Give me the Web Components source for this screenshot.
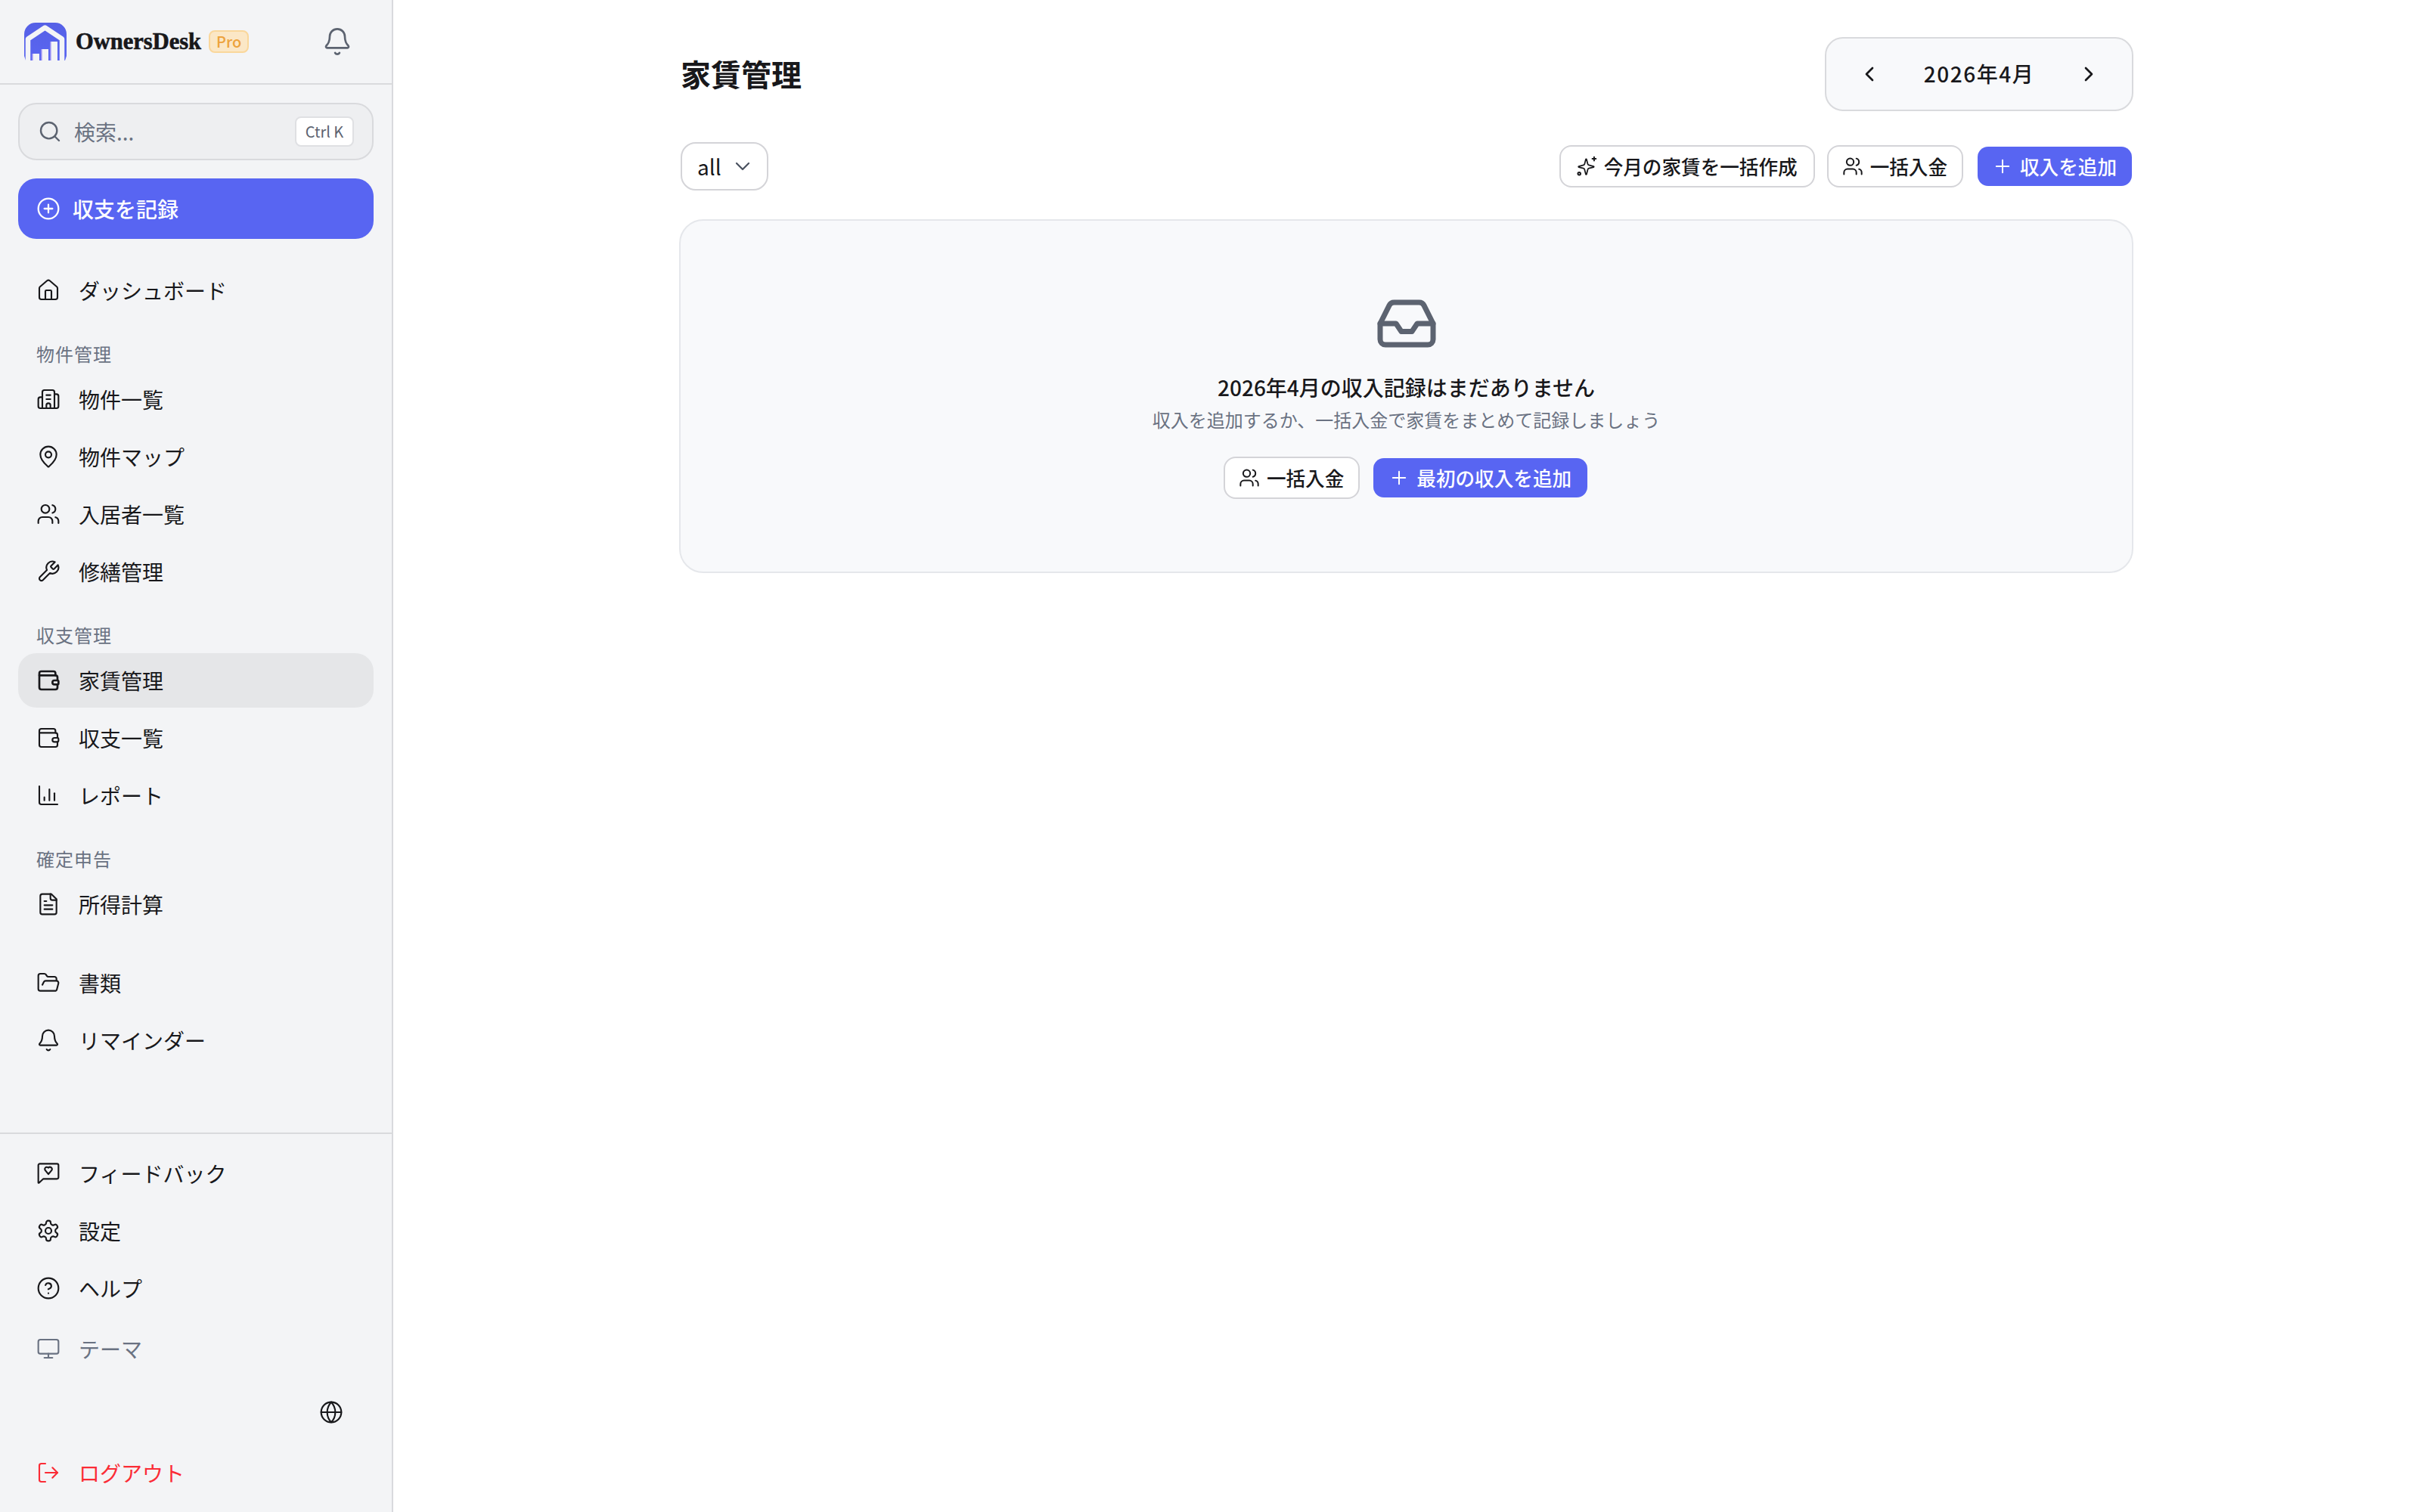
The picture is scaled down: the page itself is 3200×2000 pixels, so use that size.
<!DOCTYPE html>
<html lang="ja">
<head>
<meta charset="utf-8">
<title>OwnersDesk</title>
<style>
  html, body { margin: 0; background: #fff; }
  body {
    font-family: "Noto Sans CJK JP", "Noto Sans", sans-serif;
    color: #18181b;
  }
</style>
</head>
<body>
<od-app>
  <od-sidebar slot="sidebar">
    <od-search></od-search>
    <od-record-button>収支を記録</od-record-button>

    <od-nav-group>
      <od-nav-item icon="house">ダッシュボード</od-nav-item>
    </od-nav-group>
    <od-nav-group label="物件管理">
      <od-nav-item icon="building">物件一覧</od-nav-item>
      <od-nav-item icon="pin">物件マップ</od-nav-item>
      <od-nav-item icon="users">入居者一覧</od-nav-item>
      <od-nav-item icon="wrench">修繕管理</od-nav-item>
    </od-nav-group>
    <od-nav-group label="収支管理">
      <od-nav-item icon="wallet" active>家賃管理</od-nav-item>
      <od-nav-item icon="wallet">収支一覧</od-nav-item>
      <od-nav-item icon="chart">レポート</od-nav-item>
    </od-nav-group>
    <od-nav-group label="確定申告">
      <od-nav-item icon="file">所得計算</od-nav-item>
    </od-nav-group>
    <od-nav-group>
      <od-nav-item icon="folder">書類</od-nav-item>
      <od-nav-item icon="bell">リマインダー</od-nav-item>
    </od-nav-group>

    <od-nav-item slot="footer" icon="feedback">フィードバック</od-nav-item>
    <od-nav-item slot="footer" icon="settings">設定</od-nav-item>
    <od-nav-item slot="footer" icon="help">ヘルプ</od-nav-item>
    <od-nav-item slot="footer" icon="monitor" tone="muted" style="margin-top:5px">テーマ</od-nav-item>
    <od-lang-row slot="footer" style="margin-top:8px"></od-lang-row>
    <od-nav-item slot="footer" icon="logout" tone="danger" style="margin-top:4px">ログアウト</od-nav-item>
  </od-sidebar>

  <od-page-head>
    家賃管理
    <od-month-nav slot="actions">2026年4月</od-month-nav>
  </od-page-head>

  <od-toolbar>
    <od-select slot="start">all</od-select>
    <od-button icon="sparkles" style="padding:0 21px 0 20px">今月の家賃を一括作成</od-button>
    <od-button icon="users">一括入金</od-button>
    <od-button icon="plus" variant="primary" style="margin-left:1px">収入を追加</od-button>
  </od-toolbar>

  <od-empty-state>
    <span slot="title">2026年4月の収入記録はまだありません</span>
    <span slot="desc">収入を追加するか、一括入金で家賃をまとめて記録しましょう</span>
    <od-button slot="actions" icon="users">一括入金</od-button>
    <od-button slot="actions" icon="plus" variant="primary" style="padding:0 21px 0 20px">最初の収入を追加</od-button>
  </od-empty-state>
</od-app>

<script>
// lucide系のパス。線の太さは od-icon 側で指定する
const ICONS = {
  house: '<path d="M15 21v-8a1 1 0 0 0-1-1h-4a1 1 0 0 0-1 1v8"/><path d="M3 10a2 2 0 0 1 .709-1.528l7-5.999a2 2 0 0 1 2.582 0l7 5.999A2 2 0 0 1 21 10v9a2 2 0 0 1-2 2H5a2 2 0 0 1-2-2z"/>',
  building: '<path d="M10 12h4"/><path d="M10 8h4"/><path d="M14 21v-3a2 2 0 0 0-4 0v3"/><path d="M6 10H4a2 2 0 0 0-2 2v7a2 2 0 0 0 2 2h16a2 2 0 0 0 2-2V9a2 2 0 0 0-2-2h-2"/><path d="M6 21V5a2 2 0 0 1 2-2h8a2 2 0 0 1 2 2v16"/>',
  pin: '<path d="M20 10c0 4.993-5.539 10.193-7.399 11.799a1 1 0 0 1-1.202 0C9.539 20.193 4 14.993 4 10a8 8 0 0 1 16 0"/><circle cx="12" cy="10" r="3"/>',
  users: '<path d="M16 21v-2a4 4 0 0 0-4-4H6a4 4 0 0 0-4 4v2"/><path d="M16 3.128a4 4 0 0 1 0 7.744"/><path d="M22 21v-2a4 4 0 0 0-3-3.87"/><circle cx="9" cy="7" r="4"/>',
  wrench: '<path d="M14.7 6.3a1 1 0 0 0 0 1.4l1.6 1.6a1 1 0 0 0 1.4 0l3.77-3.77a6 6 0 0 1-7.94 7.94l-6.91 6.91a2.12 2.12 0 0 1-3-3l6.91-6.91a6 6 0 0 1 7.94-7.94l-3.76 3.76z"/>',
  wallet: '<path d="M19 7V5a2 2 0 0 0-2-2H5a2 2 0 0 0-2 2v14a2 2 0 0 0 2 2h14a2 2 0 0 0 2-2v-3"/><path d="M3 7h16a2 2 0 0 1 2 2v3"/><path d="M21 12h-3a2 2 0 0 0 0 4h3a1 1 0 0 0 1-1v-2a1 1 0 0 0-1-1z"/>',
  chart: '<path d="M3 3v16a2 2 0 0 0 2 2h16"/><path d="M8 17v-3"/><path d="M13 17V6"/><path d="M18 17v-7"/>',
  file: '<path d="M15 2H6a2 2 0 0 0-2 2v16a2 2 0 0 0 2 2h12a2 2 0 0 0 2-2V7Z"/><path d="M14 2v4a2 2 0 0 0 2 2h4"/><path d="M10 9H8"/><path d="M16 13H8"/><path d="M16 17H8"/>',
  folder: '<path d="m6 14 1.5-2.9A2 2 0 0 1 9.24 10H20a2 2 0 0 1 1.94 2.5l-1.54 6a2 2 0 0 1-1.95 1.5H4a2 2 0 0 1-2-2V5a2 2 0 0 1 2-2h3.9a2 2 0 0 1 1.69.9l.81 1.2a2 2 0 0 0 1.67.9H18a2 2 0 0 1 2 2v2"/>',
  bell: '<path d="M10.268 21a2 2 0 0 0 3.464 0"/><path d="M3.262 15.326A1 1 0 0 0 4 17h16a1 1 0 0 0 .74-1.673C19.41 13.956 18 12.499 18 8A6 6 0 0 0 6 8c0 4.499-1.411 5.956-2.738 7.326"/>',
  feedback: '<path d="M22 16a1.5 1.5 0 0 1-1.5 1.5H7l-4.4 4a.4.4 0 0 1-.6-.3V4a1.5 1.5 0 0 1 1.5-1.5h17A1.5 1.5 0 0 1 22 4z"/><path d="M14.8 6.3a2 2 0 0 0-2.7 0l-.1.2-.2-.2a2 2 0 1 0-2.7 3l2.9 3.5 3-3.5c.9-1 .8-2.1-.2-3"/>',
  settings: '<path d="M12.22 2h-.44a2 2 0 0 0-2 2v.18a2 2 0 0 1-1 1.73l-.43.25a2 2 0 0 1-2 0l-.15-.08a2 2 0 0 0-2.73.73l-.22.38a2 2 0 0 0 .73 2.73l.15.1a2 2 0 0 1 1 1.72v.51a2 2 0 0 1-1 1.74l-.15.09a2 2 0 0 0-.73 2.73l.22.38a2 2 0 0 0 2.73.73l.15-.08a2 2 0 0 1 2 0l.43.25a2 2 0 0 1 1 1.73V20a2 2 0 0 0 2 2h.44a2 2 0 0 0 2-2v-.18a2 2 0 0 1 1-1.73l.43-.25a2 2 0 0 1 2 0l.15.08a2 2 0 0 0 2.73-.73l.22-.39a2 2 0 0 0-.73-2.73l-.15-.08a2 2 0 0 1-1-1.74v-.5a2 2 0 0 1 1-1.74l.15-.09a2 2 0 0 0 .73-2.73l-.22-.38a2 2 0 0 0-2.73-.73l-.15.08a2 2 0 0 1-2 0l-.43-.25a2 2 0 0 1-1-1.73V4a2 2 0 0 0-2-2z"/><circle cx="12" cy="12" r="3"/>',
  help: '<circle cx="12" cy="12" r="10"/><path d="M9.09 9a3 3 0 0 1 5.83 1c0 2-3 3-3 3"/><path d="M12 17h.01"/>',
  monitor: '<rect width="20" height="14" x="2" y="3" rx="2"/><path d="M8 21h8"/><path d="M12 17v4"/>',
  globe: '<circle cx="12" cy="12" r="10"/><path d="M12 2a14.5 14.5 0 0 0 0 20 14.5 14.5 0 0 0 0-20"/><path d="M2 12h20"/>',
  logout: '<path d="M9 21H5a2 2 0 0 1-2-2V5a2 2 0 0 1 2-2h4"/><path d="m16 17 5-5-5-5"/><path d="M21 12H9"/>',
  search: '<circle cx="11" cy="11" r="8"/><path d="m21 21-4.3-4.3"/>',
  circlePlus: '<circle cx="12" cy="12" r="10"/><path d="M8 12h8"/><path d="M12 8v8"/>',
  plus: '<path d="M5 12h14"/><path d="M12 5v14"/>',
  left: '<path d="m15 18-6-6 6-6"/>',
  right: '<path d="m9 18 6-6-6-6"/>',
  down: '<path d="m6 9 6 6 6-6"/>',
  sparkles: '<path transform="translate(11.5 12.5) scale(.88) translate(-12 -12)" d="M9.937 15.5A2 2 0 0 0 8.5 14.063l-6.135-1.582a.5.5 0 0 1 0-.962L8.5 9.936A2 2 0 0 0 9.937 8.5l1.582-6.135a.5.5 0 0 1 .963 0L14.063 8.5A2 2 0 0 0 15.5 9.937l6.135 1.581a.5.5 0 0 1 0 .964L15.5 14.063a2 2 0 0 0-1.437 1.437l-1.582 6.135a.5.5 0 0 1-.963 0z"/><path d="M20.5 1.5v4"/><path d="M22.5 3.5h-4"/><circle cx="3.6" cy="20.4" r="1.5"/>',
  inbox: '<path d="M22 12h-6l-2 3h-4l-2-3H2"/><path d="M5.45 5.11 2 12v6a2 2 0 0 0 2 2h16a2 2 0 0 0 2-2v-6l-3.45-6.89A2 2 0 0 0 16.76 4H7.24a2 2 0 0 0-1.79 1.11z"/>'
};

class OdIcon extends HTMLElement {
  connectedCallback() {
    const name = this.getAttribute('name');
    const size = this.getAttribute('size') || 32;
    const sw = this.getAttribute('stroke') || 1.6;
    const shadow = this.shadowRoot || this.attachShadow({ mode: 'open' });
    shadow.innerHTML = `
      <style>
        :host { display: inline-flex; flex: none; width: ${size}px; height: ${size}px; }
        svg { display: block; width: 100%; height: 100%; }
      </style>
      <svg viewBox="0 0 24 24" fill="none" stroke="currentColor" stroke-width="${sw}"
        stroke-linecap="round" stroke-linejoin="round">${ICONS[name] || ''}</svg>`;
  }
}

class OdLogo extends HTMLElement {
  constructor() {
    super();
    this.attachShadow({ mode: 'open' }).innerHTML = `
      <style>
        :host { display: flex; align-items: center; }
        svg { display: block; width: 56px; height: 50px; flex: none; }
        .name {
          margin-left: 12px;
          font: 700 30.5px/40px "Liberation Serif", serif;
          color: #18181b;
          -webkit-text-stroke: .6px #18181b;
        }
        .pro {
          margin-left: 10px;
          box-sizing: border-box;
          height: 30px;
          padding: 0 8px;
          display: flex;
          align-items: center;
          border: 2px solid #fad79b;
          border-radius: 8px;
          background: #fbe7c6;
          color: #eda33c;
          font: 500 20px/1 "Noto Sans CJK JP", sans-serif;
        }
      </style>
      <svg viewBox="0 0 56 50">
        <defs>
          <linearGradient id="g" x1="0" y1="0" x2="0" y2="1">
            <stop offset="0" stop-color="#5560e6"/>
            <stop offset="1" stop-color="#5a66f1"/>
          </linearGradient>
        </defs>
        <path d="M0 44V15A15 15 0 0 1 15 0H41A15 15 0 0 1 56 15V44L54 50H2z" fill="url(#g)"/>
        <path d="M5 50V21.5L27.5 6.5L50 21.5V50" fill="none" stroke="#f3f4f6" stroke-width="6.5" stroke-linejoin="round"/>
        <rect x="11" y="41" width="9" height="9" fill="#f3f4f6"/>
        <rect x="23" y="35" width="9" height="15" fill="#f3f4f6"/>
        <rect x="35" y="25" width="9" height="25" fill="#f3f4f6"/>
        <path d="M11 41v9M23 35v15M35 25v25" stroke="#a79cf5" stroke-width="1.4"/>
      </svg>
      <span class="name">OwnersDesk</span>
      <span class="pro">Pro</span>`;
  }
}

class OdSearch extends HTMLElement {
  constructor() {
    super();
    this.attachShadow({ mode: 'open' }).innerHTML = `
      <style>
        :host {
          display: flex;
          align-items: center;
          box-sizing: border-box;
          height: 76px;
          padding: 0 24px;
          border: 2px solid #d9dadd;
          border-radius: 24px;
          background: #eeeff1;
          color: #6a7282;
        }
        od-icon { color: #5c6370; }
        .ph { margin-left: 16px; flex: 1; font-size: 28px; line-height: 40px; }
        kbd {
          box-sizing: border-box;
          width: 78px;
          height: 40px;
          display: flex;
          align-items: center;
          justify-content: center;
          border: 2px solid #dfe0e3;
          border-radius: 8px;
          background: #fff;
          color: #5c6370;
          font: 400 20px/1 "Noto Sans CJK JP", sans-serif;
        }
      </style>
      <od-icon name="search" stroke="1.8"></od-icon>
      <span class="ph">検索...</span>
      <kbd>Ctrl K</kbd>`;
  }
}

class OdRecordButton extends HTMLElement {
  constructor() {
    super();
    this.attachShadow({ mode: 'open' }).innerHTML = `
      <style>
        :host {
          display: flex;
          align-items: center;
          box-sizing: border-box;
          height: 80px;
          margin-top: 24px;
          padding: 0 24px;
          border-radius: 24px;
          background: #5865f2;
          color: #fff;
          font-size: 28px;
          font-weight: 500;
          line-height: 40px;
        }
        od-icon { margin-right: 16px; }
      </style>
      <od-icon name="circlePlus" size="32" stroke="1.7"></od-icon>
      <slot></slot>`;
  }
}

class OdNavGroup extends HTMLElement {
  connectedCallback() {
    const label = this.getAttribute('label');
    const shadow = this.shadowRoot || this.attachShadow({ mode: 'open' });
    shadow.innerHTML = `
      <style>
        :host { display: flex; flex-direction: column; gap: 4px; margin-top: 32px; }
        .label {
          margin-bottom: 4px;
          padding-left: 24px;
          font-size: 24px;
          line-height: 32px;
          letter-spacing: 1px;
          color: #6a7282;
        }
      </style>
      ${label ? `<div class="label">${label}</div>` : ''}
      <slot></slot>`;
  }
}

class OdNavItem extends HTMLElement {
  connectedCallback() {
    const icon = this.getAttribute('icon');
    const active = this.hasAttribute('active');
    const shadow = this.shadowRoot || this.attachShadow({ mode: 'open' });
    shadow.innerHTML = `
      <style>
        :host {
          display: flex;
          align-items: center;
          box-sizing: border-box;
          height: 72px;
          padding: 0 24px;
          gap: 24px;
          border-radius: 24px;
          font-size: 28px;
          line-height: 40px;
          color: #18181b;
        }
        :host([active]) { background: #e5e6e8; }
        :host([tone="muted"]) { color: #6a7282; }
        :host([tone="danger"]) { color: #fb2c36; }
      </style>
      <od-icon name="${icon}" stroke="${active ? 2 : 1.6}"></od-icon>
      <span><slot></slot></span>`;
  }
}

class OdLangRow extends HTMLElement {
  constructor() {
    super();
    this.attachShadow({ mode: 'open' }).innerHTML = `
      <style>
        :host {
          display: flex;
          align-items: center;
          justify-content: flex-end;
          height: 72px;
          padding-right: 40px;
        }
      </style>
      <od-icon name="globe"></od-icon>`;
  }
}

class OdSidebar extends HTMLElement {
  constructor() {
    super();
    this.attachShadow({ mode: 'open' }).innerHTML = `
      <style>
        :host {
          display: flex;
          flex-direction: column;
          flex: none;
          box-sizing: border-box;
          width: 520px;
          height: 2000px;
          border-right: 2px solid #d9dadd;
          background: #f3f4f6;
        }
        header {
          display: flex;
          align-items: center;
          justify-content: space-between;
          box-sizing: border-box;
          height: 112px;
          padding: 0 52px 0 32px;
          border-bottom: 2px solid #d9dadd;
        }
        header od-icon { color: #5c6370; }
        .body { flex: 1; padding: 24px 24px 0; }
        .foot {
          display: flex;
          flex-direction: column;
          gap: 4px;
          box-sizing: border-box;
          height: 502px;
          padding: 16px 24px;
          border-top: 2px solid #d9dadd;
        }
      </style>
      <header>
        <od-logo></od-logo>
        <od-icon name="bell" size="40" stroke="1.6"></od-icon>
      </header>
      <div class="body"><slot></slot></div>
      <div class="foot"><slot name="footer"></slot></div>`;
  }
}

class OdPageHead extends HTMLElement {
  constructor() {
    super();
    this.attachShadow({ mode: 'open' }).innerHTML = `
      <style>
        :host { display: flex; align-items: center; justify-content: space-between; padding-left: 2px; }
        h1 { margin: 0 0 3px; font-size: 40px; line-height: 56px; font-weight: 700; color: #18181b; }
      </style>
      <h1><slot></slot></h1>
      <slot name="actions"></slot>`;
  }
}

class OdMonthNav extends HTMLElement {
  constructor() {
    super();
    this.attachShadow({ mode: 'open' }).innerHTML = `
      <style>
        :host {
          display: flex;
          align-items: center;
          justify-content: space-between;
          box-sizing: border-box;
          width: 408px;
          height: 98px;
          padding: 0 41px;
          border: 2px solid #d9dadd;
          border-radius: 24px;
          background: #f8f9fb;
          font-size: 28px;
          font-weight: 500;
          line-height: 40px;
          letter-spacing: 1.5px;
        }
        span { margin-top: -2px; }
      </style>
      <od-icon name="left" stroke="2"></od-icon>
      <span><slot></slot></span>
      <od-icon name="right" stroke="2"></od-icon>`;
  }
}

class OdToolbar extends HTMLElement {
  constructor() {
    super();
    this.attachShadow({ mode: 'open' }).innerHTML = `
      <style>
        :host {
          display: flex;
          align-items: center;
          justify-content: space-between;
          height: 64px;
          margin: 41px 0 38px;
          padding-left: 2px;
        }
        .right { display: flex; align-items: center; gap: 16px; }
      </style>
      <slot name="start"></slot>
      <div class="right"><slot></slot></div>`;
  }
}

class OdSelect extends HTMLElement {
  constructor() {
    super();
    this.attachShadow({ mode: 'open' }).innerHTML = `
      <style>
        :host {
          display: flex;
          align-items: center;
          box-sizing: border-box;
          width: 116px;
          height: 64px;
          padding: 0 16px 0 20px;
          border: 2px solid #d4d4d8;
          border-radius: 20px;
          font-size: 28px;
          line-height: 40px;
          background: #fff;
        }
        span { flex: 1; }
        od-icon { color: #4b5260; }
      </style>
      <span><slot></slot></span>
      <od-icon name="down" size="32" stroke="1.7"></od-icon>`;
  }
}

class OdButton extends HTMLElement {
  connectedCallback() {
    const icon = this.getAttribute('icon');
    const shadow = this.shadowRoot || this.attachShadow({ mode: 'open' });
    shadow.innerHTML = `
      <style>
        :host {
          display: inline-flex;
          align-items: center;
          box-sizing: border-box;
          height: 56px;
          padding: 0 19px 0 18px;
          gap: 9px;
          border: 2px solid #d4d4d8;
          border-radius: 16px;
          background: #fff;
          color: #18181b;
          font-size: 25.6px;
          font-weight: 500;
          line-height: 36px;
          white-space: nowrap;
        }
        :host([variant="primary"]) {
          padding: 0 20px 0 19px;
          border-color: transparent;
          background: #5865f2;
          background-clip: padding-box;
          color: #fff;
        }
      </style>
      <od-icon name="${icon}" size="28" stroke="1.7"></od-icon>
      <slot></slot>`;
  }
}

class OdEmptyState extends HTMLElement {
  constructor() {
    super();
    this.attachShadow({ mode: 'open' }).innerHTML = `
      <style>
        :host {
          display: flex;
          flex-direction: column;
          align-items: center;
          box-sizing: border-box;
          height: 468px;
          padding-top: 94px;
          border: 2px solid #e5e7eb;
          border-radius: 32px;
          background: #f8f9fb;
        }
        od-icon { color: #5c6370; }
        .title { margin-top: 22px; font-size: 28px; font-weight: 500; line-height: 40px; color: #18181b; }
        .desc { margin-top: 5px; font-size: 24px; line-height: 36px; color: #6a7282; }
        .actions { display: flex; gap: 16px; margin-top: 31px; }
      </style>
      <od-icon name="inbox" size="84" stroke="2"></od-icon>
      <div class="title"><slot name="title"></slot></div>
      <div class="desc"><slot name="desc"></slot></div>
      <div class="actions"><slot name="actions"></slot></div>`;
  }
}

class OdApp extends HTMLElement {
  constructor() {
    super();
    this.attachShadow({ mode: 'open' }).innerHTML = `
      <style>
        :host { display: flex; min-height: 2000px; }
        main { flex: 1; min-width: 0; padding: 49px 1px 0 0; }
        .inner { width: 1923px; margin: 0 auto; }
      </style>
      <slot name="sidebar"></slot>
      <main><div class="inner"><slot></slot></div></main>`;
  }
}

customElements.define('od-icon', OdIcon);
customElements.define('od-logo', OdLogo);
customElements.define('od-search', OdSearch);
customElements.define('od-record-button', OdRecordButton);
customElements.define('od-nav-group', OdNavGroup);
customElements.define('od-nav-item', OdNavItem);
customElements.define('od-lang-row', OdLangRow);
customElements.define('od-sidebar', OdSidebar);
customElements.define('od-page-head', OdPageHead);
customElements.define('od-month-nav', OdMonthNav);
customElements.define('od-toolbar', OdToolbar);
customElements.define('od-select', OdSelect);
customElements.define('od-button', OdButton);
customElements.define('od-empty-state', OdEmptyState);
customElements.define('od-app', OdApp);
</script>
</body>
</html>
